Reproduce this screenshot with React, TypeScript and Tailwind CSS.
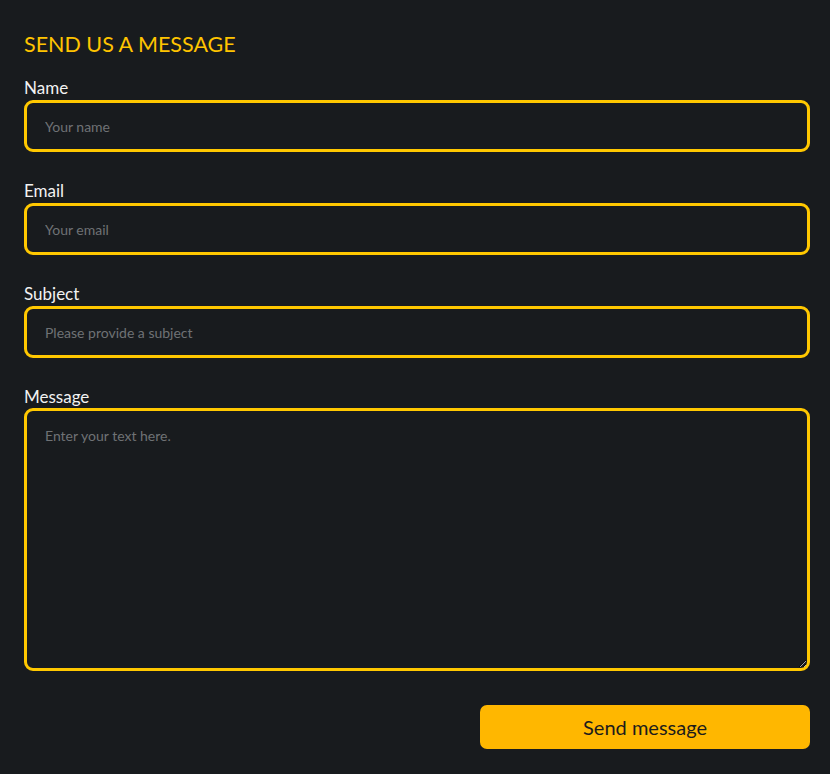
import React from "react";

function Field({ label, placeholder }: { label: string; placeholder: string }) {
  return (
    <div className="flex flex-col">
      <label className="text-[17px] leading-[22px] text-[#f2f2f2]">{label}</label>
      <input
        type="text"
        placeholder={placeholder}
        className="mt-[1px] h-[52px] w-full rounded-[9px] border-[3px] border-[#ffc800] bg-transparent px-[18px] text-[14px] text-[#e5e5e5] outline-none placeholder:text-[#6f7275]"
      />
    </div>
  );
}

export default function App() {
  return (
    <div
      className="min-h-[774px] w-full bg-[#181b1e] pl-6 pr-[20px] pt-[31px]"
      style={{ fontFamily: "Lato, 'Open Sans', sans-serif" }}
    >
      <h2 className="text-[21.5px] leading-[26px] text-[#ffc400]">SEND US A MESSAGE</h2>
      <form className="mt-[20px] flex flex-col gap-[28px]" onSubmit={(e) => e.preventDefault()}>
        <Field label="Name" placeholder="Your name" />
        <Field label="Email" placeholder="Your email" />
        <Field label="Subject" placeholder="Please provide a subject" />
        <div className="flex flex-col">
          <label className="text-[17px] leading-[22px] text-[#f2f2f2]">Message</label>
          <textarea
            placeholder="Enter your text here."
            className="h-[263px] w-full resize-y rounded-[9px] border-[3px] border-[#ffc800] bg-transparent px-[18px] py-[14px] text-[14px] text-[#e5e5e5] outline-none placeholder:text-[#6f7275]"
          />
        </div>
        <div className="mt-[6px] flex justify-end">
          <button
            type="submit"
            className="h-[44px] w-[330px] rounded-[7px] bg-[#ffb700] text-[20px] text-[#1c1c1c]"
          >
            Send message
          </button>
        </div>
      </form>
    </div>
  );
}
